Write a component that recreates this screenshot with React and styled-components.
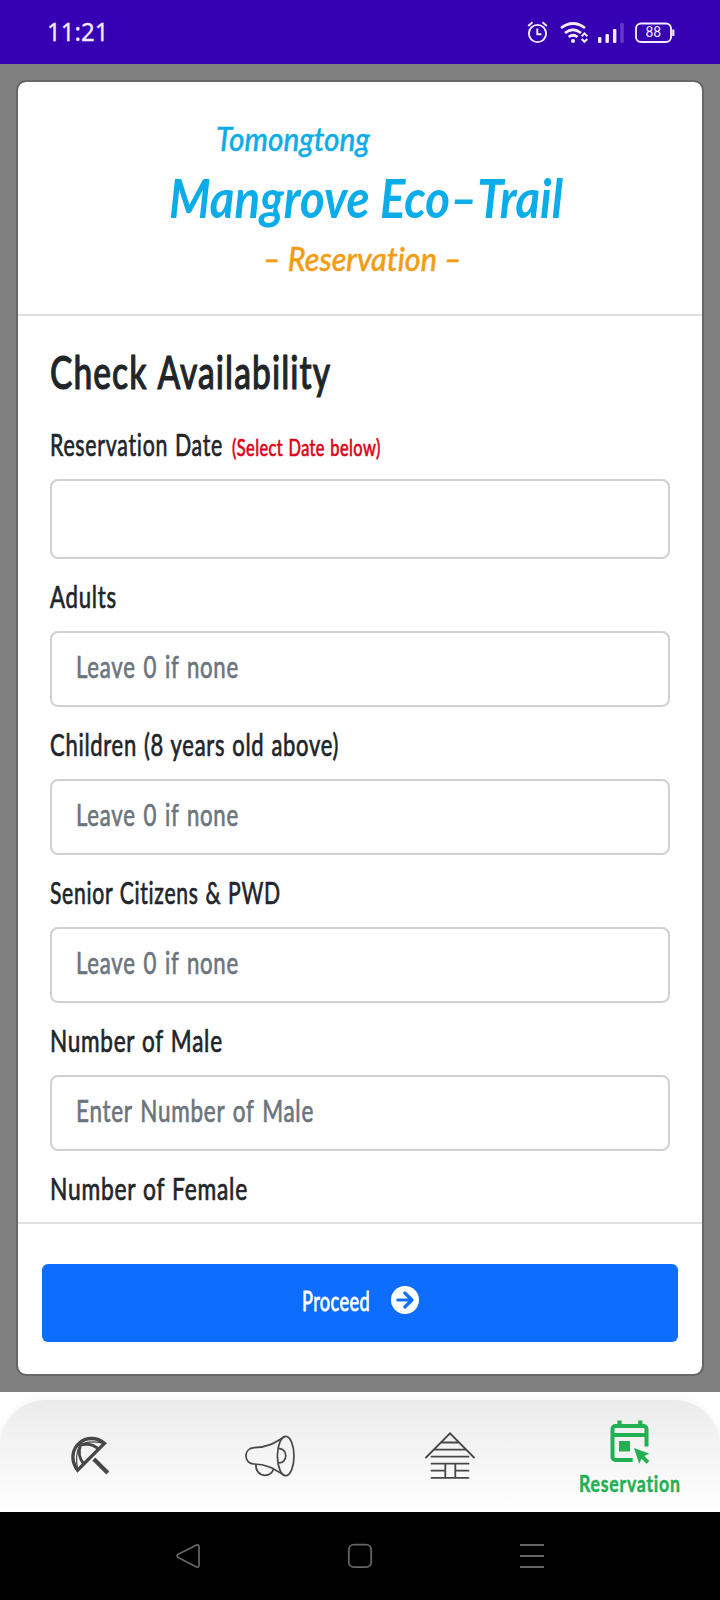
import React, { useLayoutEffect, useRef, useState } from "react";
import styled, { createGlobalStyle } from "styled-components";

const GlobalStyle = createGlobalStyle`
  * { box-sizing: border-box; }
  body {
    margin: 0;
    background: #000;
    font-family: Lato, "Open Sans", sans-serif;
    font-variant-ligatures: none;
  }
`;

const FitBox = styled.span`
  display: inline-block;
  flex: none;
  width: ${(p) => p.$width}px;
  white-space: nowrap;
`;

const FitInner = styled.span`
  display: inline-block;
  transform-origin: 0 50%;
`;

/* Condenses a line of text to the given width. */
function Fit({ width, children }) {
  const ref = useRef(null);
  const [scale, setScale] = useState(1);
  useLayoutEffect(() => {
    setScale(width / ref.current.offsetWidth);
  }, [width, children]);
  return (
    <FitBox $width={width}>
      <FitInner ref={ref} style={{ transform: `scaleX(${scale})` }}>{children}</FitInner>
    </FitBox>
  );
}

const Screen = styled.div`
  width: 720px;
  height: 1600px;
  display: flex;
  flex-direction: column;
  overflow: hidden;
`;

const StatusBar = styled.header`
  height: 64px;
  flex: none;
  background: #3600b3;
  display: flex;
  align-items: center;
  justify-content: space-between;
  padding: 0 45px 0 47px;
  color: #f4ecff;
`;

const Clock = styled.div`
  font: 400 26px/62px "Noto Sans", sans-serif;
  height: 64px;
  -webkit-text-stroke: 0.3px currentColor;
`;

const StatusIcons = styled.svg`
  width: 148px;
  height: 26px;
  display: block;
`;

const Backdrop = styled.main`
  height: 1328px;
  flex: none;
  background: #808080;
  padding: 16px;
`;

const Card = styled.section`
  height: 100%;
  background: #fff;
  background-clip: padding-box;
  border: 2px solid #666;
  border-radius: 10px;
  display: flex;
  flex-direction: column;
`;

const CardHeader = styled.div`
  height: 234px;
  flex: none;
  border-bottom: 2px solid #dfdfdf;
  padding: 26px 0 0 151px;
`;

const ScriptLine = styled.div`
  height: 60px;
  line-height: 60px;
  font-style: italic;
  font-weight: ${(p) => p.$weight};
  font-size: ${(p) => p.$size}px;
  color: ${(p) => p.$color};
  padding-left: ${(p) => p.$indent}px;
  -webkit-text-stroke: ${(p) => p.$stroke || 0}px currentColor;
`;

const CardBody = styled.div`
  flex: 1;
  min-height: 0;
  overflow: hidden;
  padding: 17px 32px 0;
  color: #212529;
`;

const Heading = styled.h1`
  margin: 0;
  height: 78px;
  font-size: 46px;
  line-height: 78px;
  font-weight: 500;
  letter-spacing: 1.5px;
  word-spacing: 2px;
  -webkit-text-stroke: 1.1px currentColor;
`;

const Field = styled.div`
  margin-bottom: 4px;
`;

const Label = styled.label`
  display: flex;
  align-items: baseline;
  height: 68px;
  line-height: 66px;
  font-size: 30.5px;
  letter-spacing: 1px;
  word-spacing: 1px;
  gap: 9px;
  -webkit-text-stroke: 0.7px currentColor;
`;

const Hint = styled.span`
  color: #dc0014;
  font-size: 23px;
  letter-spacing: 0.6px;
`;

const InputBox = styled.div`
  height: ${(p) => p.$height}px;
  border: 2px solid #d0d1d2;
  border-radius: 8px;
  padding: 0 24px 6px;
  display: flex;
  align-items: center;
  font-size: 30.5px;
  line-height: 40px;
  letter-spacing: 1px;
  word-spacing: 2px;
  color: #6c757d;
  -webkit-text-stroke: 0.7px currentColor;
`;

const CardFooter = styled.div`
  height: 152px;
  flex: none;
  border-top: 2px solid #dfdfdf;
  padding: 40px 24px 0;
`;

const ProceedButton = styled.button`
  width: 100%;
  height: 78px;
  margin: 0;
  padding: 0;
  border: 0;
  border-radius: 6px;
  background: #0d6efd;
  color: #fff;
  display: flex;
  align-items: center;
  justify-content: center;
  gap: 21px;
  font-family: inherit;
  font-size: 27px;
  line-height: 60px;
  letter-spacing: 0.6px;
  -webkit-text-stroke: 0.8px currentColor;

  > span { margin-bottom: 4px; }
  svg { width: 28px; height: 28px; display: block; margin-bottom: 7px; }
`;

const TabArea = styled.div`
  height: 120px;
  flex: none;
  background: #fff;
  padding-top: 8px;
  overflow: hidden;
`;

const TabBar = styled.nav`
  height: 112px;
  border-radius: 46px 46px 0 0;
  background: linear-gradient(#ebebeb, #fff);
  box-shadow: 0 0 8px rgba(0, 0, 0, 0.06);
  display: grid;
  grid-template-columns: repeat(4, 180px);
`;

const Tab = styled.div`
  display: flex;
  flex-direction: column;
  align-items: center;
  padding-top: ${(p) => p.$top}px;
  color: ${(p) => (p.$active ? "#22b053" : "#474747")};
  font-size: 22.5px;
  line-height: 30px;
  font-weight: 700;
  letter-spacing: 1px;

  svg { display: block; flex: none; }
`;

const TabLabel = styled.div`
  margin-top: 5px;
  -webkit-text-stroke: 0.5px currentColor;
`;

const SystemNav = styled.footer`
  height: 88px;
  flex: none;
  background: #000;
  display: flex;
  justify-content: space-between;
  align-items: center;
  padding: 0 175px;

  svg { display: block; width: 26px; height: 26px; }
`;

function StatusGlyphs() {
  return (
    <StatusIcons viewBox="0 0 148 26" fill="none" stroke="#f4ecff" strokeWidth="1.9">
      <circle cx="10.5" cy="14.5" r="8.6" />
      <path d="M10.3 9.5v5.8h4.2M1.2 7l4.3-3.8M19.8 7l-4.3-3.8" />
      <path d="M34 9Q46 0 58 9M38 14Q46 7.5 54 14M41.7 18Q46 14.5 50.5 18" strokeWidth="2.7" />
      <circle cx="46" cy="22" r="2" fill="#f4ecff" stroke="none" />
      <path d="M54.7 17.2l2.8-2.8 2.8 2.8M54.7 20l2.8 2.8 2.8-2.8" strokeWidth="2" />
      <g fill="#f4ecff" stroke="none">
        <rect x="71" y="18" width="3.4" height="6" rx="1" />
        <rect x="78.5" y="15" width="3.4" height="9" rx="1" />
        <rect x="86" y="10" width="3.4" height="14" rx="1" />
        <rect x="93.3" y="4" width="3.4" height="20" rx="1" opacity="0.25" />
      </g>
      <rect x="109" y="4.5" width="35" height="18.5" rx="5" />
      <path d="M146.3 10.5v6.5" strokeWidth="2.2" />
      <text x="126.3" y="18.3" textAnchor="middle" fontFamily="Roboto, sans-serif" fontSize="14" fill="#f4ecff" stroke="none">88</text>
    </StatusIcons>
  );
}

function ArrowCircle() {
  return (
    <svg viewBox="0 0 28 28">
      <circle cx="14" cy="14" r="14" fill="#fff" />
      <path d="M6.8 14h13.5M13.8 7l7.2 7-7.2 7" fill="none" stroke="#0d6efd" strokeWidth="3.2" strokeLinecap="round" strokeLinejoin="round" />
    </svg>
  );
}

function Umbrella() {
  return (
    <svg width="38" height="39" viewBox="0 0 38 39" fill="none" stroke="currentColor">
      <path d="M6.6 34.2C-1 24 1.5 12.5 8.5 7C15 1 26 1 33.4 7.4Z" strokeWidth="3.4" />
      <path d="M6.6 34.2C5 25 5.5 15 9 9C16 5 24 5 33.4 7.4" strokeWidth="1.2" />
      <path d="M9.5 9C7.2 15 8.3 22.5 12.7 28M9.5 9C16 7.2 23 9 27.6 13" strokeWidth="3" />
      <path d="M22.8 23l14 14" strokeWidth="4.2" />
    </svg>
  );
}

function Megaphone() {
  return (
    <svg width="50" height="42" viewBox="0 0 50 42" fill="none" stroke="currentColor" strokeWidth="1.7">
      <ellipse cx="40.7" cy="21" rx="8.3" ry="19.7" />
      <path d="M39.8 1.5C29 8.5 22 12.5 9 12.7C4 13 1 16.5 1 21C1 25.5 4 29 9 29C21 29 28 33 39.5 40.5" />
      <path d="M33.3 13.7C37.5 13.2 40.8 16.3 40.8 20.8C40.8 25.3 37.5 28.4 33.3 27.7M11 29.2C10.2 35.5 14.5 40.3 20 40.3C24 40.3 27.2 38.2 28.5 34.3" />
    </svg>
  );
}

function Hut() {
  return (
    <svg width="50" height="48" viewBox="0 0 50 48" fill="none" stroke="currentColor" strokeWidth="1.8" strokeLinecap="round">
      <path d="M1 25.5L25 1.3L49 25.5M16.5 10.5h17M9 17.7h32M6.5 24.7h37M6.5 31.7h37M6.5 38.7h13.5M30.5 38.7h13M6.5 45.8h37M20.3 31.7v14M30.3 31.7v14" />
    </svg>
  );
}

function CalendarPointer() {
  return (
    <svg width="40" height="44" viewBox="0 0 40 44" fill="none" stroke="currentColor">
      <path d="M22.7 40H5.5a3 3 0 0 1-3-3V9a3 3 0 0 1 3-3h28a3 3 0 0 1 3 3v17.5M2.5 15h34" strokeWidth="4" />
      <path d="M9.5 0.5v6M30.3 0.5v6" strokeWidth="4.2" />
      <path d="M9 21h11v10.5H9z" fill="currentColor" stroke="none" />
      <path d="M24 28l15.5 5.7-5.3 2.2 5.2 5-2.8 2.8-5.1-5-2.3 5z" fill="currentColor" stroke="none" />
    </svg>
  );
}

const fields = [
  { label: "Reservation Date", width: 173, hint: "(Select Date below)", height: 80 },
  { label: "Adults", width: 67, placeholder: "Leave 0 if none", placeholderWidth: 163 },
  { label: "Children (8 years old above)", width: 289, placeholder: "Leave 0 if none", placeholderWidth: 163 },
  { label: "Senior Citizens & PWD", width: 231, placeholder: "Leave 0 if none", placeholderWidth: 163 },
  { label: "Number of Male", width: 173, placeholder: "Enter Number of Male", placeholderWidth: 238 },
  { label: "Number of Female", width: 198, placeholder: "" },
];

export default function App() {
  return (
    <Screen>
      <GlobalStyle />
      <StatusBar>
        <Clock><Fit width={61}>11:21</Fit></Clock>
        <StatusGlyphs />
      </StatusBar>
      <Backdrop>
        <Card>
          <CardHeader>
            <ScriptLine $size={33} $weight={500} $stroke={0.4} $color="#0aace9" $indent={47}><Fit width={154}>Tomongtong</Fit></ScriptLine>
            <ScriptLine $size={54} $weight={700} $color="#0aace9" $indent={0}><Fit width={394}>Mangrove Eco–Trail</Fit></ScriptLine>
            <ScriptLine $size={33} $weight={500} $stroke={0.4} $color="#f39c12" $indent={94}><Fit width={199}>– Reservation –</Fit></ScriptLine>
          </CardHeader>
          <CardBody>
            <Heading><Fit width={281}>Check Availability</Fit></Heading>
            {fields.map((f) => (
              <Field key={f.label}>
                <Label>
                  <Fit width={f.width}>{f.label}</Fit>
                  {f.hint && <Hint><Fit width={149}>{f.hint}</Fit></Hint>}
                </Label>
                <InputBox $height={f.height || 76}>
                  {f.placeholder && <Fit width={f.placeholderWidth}>{f.placeholder}</Fit>}
                </InputBox>
              </Field>
            ))}
          </CardBody>
          <CardFooter>
            <ProceedButton>
              <Fit width={68}>Proceed</Fit>
              <ArrowCircle />
            </ProceedButton>
          </CardFooter>
        </Card>
      </Backdrop>
      <TabArea>
        <TabBar>
          <Tab $top={36}><Umbrella /></Tab>
          <Tab $top={35}><Megaphone /></Tab>
          <Tab $top={32}><Hut /></Tab>
          <Tab $top={20} $active>
            <CalendarPointer />
            <TabLabel><Fit width={102}>Reservation</Fit></TabLabel>
          </Tab>
        </TabBar>
      </TabArea>
      <SystemNav>
        <svg viewBox="0 0 26 26" fill="none" stroke="#666" strokeWidth="1.7" strokeLinejoin="round">
          <path d="M21.5 2L3.2 11.2Q1 12.8 3.2 14.5L21.5 24Q24 24.5 24 22.5V3.8Q24 1.5 21.5 2Z" />
        </svg>
        <svg viewBox="0 0 26 26" fill="none" stroke="#666" strokeWidth="1.8">
          <rect x="1.8" y="1.6" width="22.4" height="22.6" rx="5" />
        </svg>
        <svg viewBox="0 0 26 26" fill="none" stroke="#666" strokeWidth="1.9">
          <path d="M1 2h24M1 13h24M1 24h24" />
        </svg>
      </SystemNav>
    </Screen>
  );
}
